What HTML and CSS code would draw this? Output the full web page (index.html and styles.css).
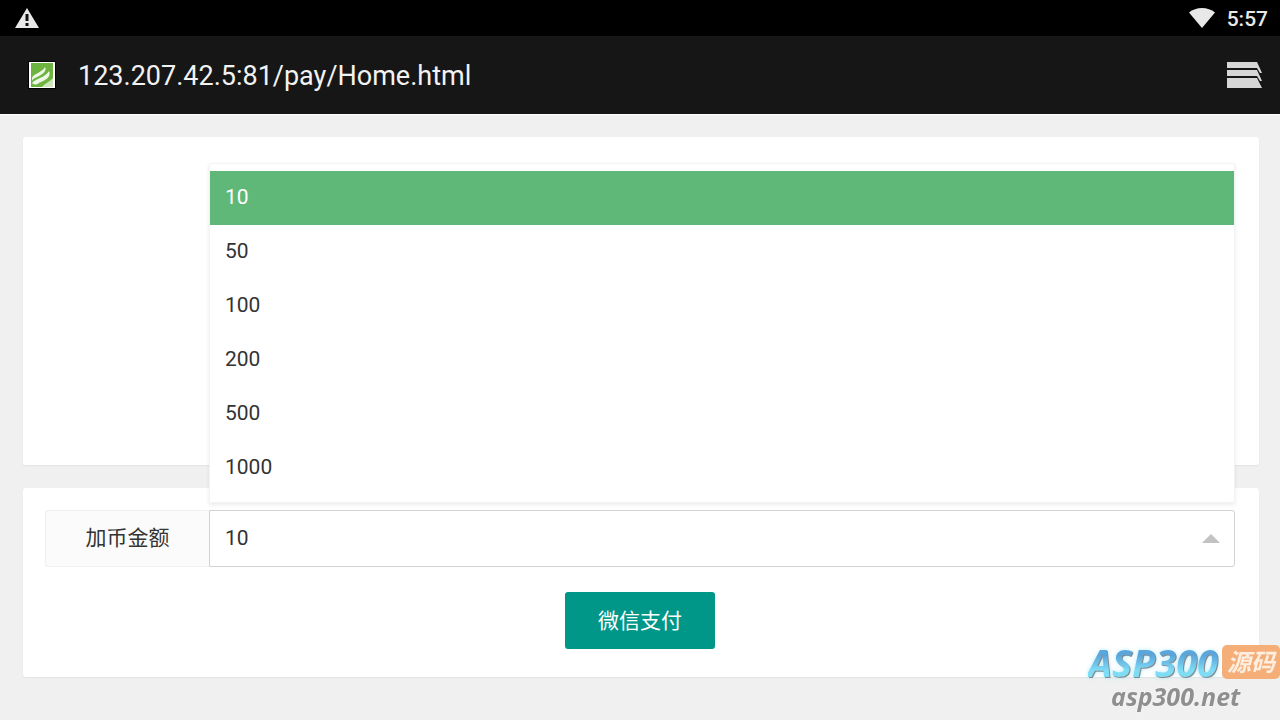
FILE: index.html
```
<!DOCTYPE html>
<html lang="zh-CN">
<head>
    <meta charset="UTF-8">
    <meta name="viewport" content="width=device-width, initial-scale=1.0">
    <title>微信支付</title>
    <link rel="stylesheet" href="styles.css">
</head>
<body>
    <div class="status-bar">
        <svg class="warn-icon" width="24" height="20" viewBox="0 0 24 20">
            <path d="M12 0L24 20H0Z" fill="#e8e8e8"/>
            <path d="M10.500 6h3v7h-3zM10.500 15h3v3h-3z" fill="#111"/>
        </svg>
        <div class="status-right">
            <svg width="26" height="20" viewBox="0 0 26 20">
                <path d="M0 4.500C7-1.500 19-1.500 26 4.500L13 20Z" fill="#e8e8e8"/>
            </svg>
            <span class="clock">5:57</span>
        </div>
    </div>

    <header class="title-bar">
        <svg class="site-icon" width="28" height="28" viewBox="0 0 28 28">
            <rect width="28" height="28" fill="#000"/>
            <rect x="1" y="1" width="26" height="26" fill="#fff"/>
            <rect x="3" y="2" width="22" height="24" fill="#6cb33f"/>
            <path d="M4 17C5 13 15 11 17 6C20 11 11 15 7 17C5 18 4 19 4 20Z" fill="#eef7e6"/>
            <path d="M4 22C7 18 18 16 21 10C24 17 15 20 11 22C8 24 6 24 4 22Z" fill="#eef7e6"/>
            <path d="M14 26C17 22 22 21 25 17V26Z" fill="#cfe6bd"/>
        </svg>
        <span class="address">123.207.42.5:81/pay/Home.html</span>
        <button type="button" class="tabs-btn" aria-label="Tabs">
            <svg width="36" height="28" viewBox="0 0 36 28">
                <path d="M0 1H30L35 12H33L30 7H0ZM0 9H30L35 20H33L30 15H0ZM0 17H30L35 27H0Z" fill="#d6d6d6"/>
            </svg>
        </button>
    </header>

    <main class="page">
        <section class="card card-code"></section>

        <section class="card">
            <form class="pay-form">
                <div class="form-item">
                    <label class="form-label" for="amount">加币金额</label>
                    <div class="select-wrap">
                        <select id="amount" class="amount">
                            <option selected>10</option>
                            <option>50</option>
                            <option>100</option>
                            <option>200</option>
                            <option>500</option>
                            <option>1000</option>
                        </select>
                        <i class="edge"></i>
                        <div class="options" role="listbox" aria-label="加币金额">
                            <button type="button" class="option selected" role="option" aria-selected="true">10</button>
                            <button type="button" class="option" role="option">50</button>
                            <button type="button" class="option" role="option">100</button>
                            <button type="button" class="option" role="option">200</button>
                            <button type="button" class="option" role="option">500</button>
                            <button type="button" class="option" role="option">1000</button>
                        </div>
                    </div>
                </div>
                <button type="submit" class="pay-btn">微信支付</button>
            </form>
        </section>
    </main>

    <div class="watermark">
        <div class="mark-top">
            <span class="mark-name">ASP300</span>
            <span class="mark-tag">源码</span>
        </div>
        <div class="mark-url">asp300.net</div>
    </div>

    <script>
        const amount = document.getElementById("amount");
        const options = document.querySelectorAll(".option");

        options.forEach(function (item) {
            item.addEventListener("click", function () {
                options.forEach(el => el.classList.remove("selected"));
                item.classList.add("selected");
                amount.value = item.textContent;
            });
        });
    </script>
</body>
</html>
```
FILE: styles.css
```
* {
    box-sizing: border-box;
}

body {
    margin: 0;
    min-height: 100vh;
    background-color: #f0f0f0;
    color: #333;
    font-family: Roboto, "Noto Sans CJK SC", sans-serif;
    font-size: 21px;
}

button,
select {
    font: inherit;
}

.status-bar {
    display: flex;
    justify-content: space-between;
    align-items: center;
    height: 36px;
    padding: 0 12px 0 15px;
    background-color: #000;
}

.status-right {
    display: flex;
    align-items: center;
    gap: 12px;
}

.clock {
    color: #e8e8e8;
    font-weight: 500;
    line-height: 36px;
    padding-top: 2px;
}

.title-bar {
    display: flex;
    align-items: center;
    height: 78px;
    padding: 0 17px 0 28px;
    background-color: #161616;
}

.address {
    flex: 1;
    margin-left: 22px;
    padding-top: 2px;
    color: #f2f2f2;
    font-size: 27px;
}

.tabs-btn {
    display: flex;
    padding: 0;
    background: none;
    border: none;
}

.page {
    display: flex;
    flex-direction: column;
    gap: 23px;
    padding: 22px 21px 23px 23px;
    border-top: 1px solid #fff;
}

.card {
    padding: 22px 24px 28px 22px;
    background-color: #fff;
    border-radius: 3px;
    box-shadow: 0 1px 2px rgba(0, 0, 0, 0.06);
}

.card-code {
    min-height: 328px;
}

.pay-form {
    display: flex;
    flex-direction: column;
    align-items: center;
    gap: 25px;
}

.form-item {
    display: flex;
    width: 100%;
    height: 57px;
}

.form-label {
    width: 164px;
    border: 1px solid #f0f0f0;
    border-right: none;
    border-radius: 3px 0 0 3px;
    background-color: #fbfbfb;
    line-height: 54px;
    text-align: center;
}

.select-wrap {
    position: relative;
    flex: 1;
}

.amount {
    width: 100%;
    height: 100%;
    padding: 0 16px 2px 15px;
    appearance: none;
    border: 1px solid #d2d2d2;
    border-radius: 0 3px 3px 0;
    background-color: #fff;
    color: #333;
}

.edge {
    position: absolute;
    top: 24px;
    right: 15px;
    border: 9px solid transparent;
    border-top-width: 0;
    border-bottom-color: #c2c2c2;
    pointer-events: none;
}

.options {
    position: absolute;
    bottom: 64px;
    left: 0;
    width: 100%;
    padding: 7px 0;
    border: 1px solid #f3f3f3;
    background-color: #fff;
    box-shadow: 0 2px 4px rgba(0, 0, 0, 0.08);
}

.option {
    display: block;
    width: 100%;
    height: 54px;
    padding: 0 15px 2px;
    border: none;
    background-color: #fff;
    color: #333;
    text-align: left;
}

.option.selected {
    background-color: #5fb878;
    color: #fff;
}

.pay-btn {
    height: 57px;
    padding: 0 33px 4px;
    border: none;
    border-radius: 3px;
    background-color: #009688;
    color: #fff;
}

.watermark {
    position: fixed;
    right: 0;
    bottom: 7px;
    font-family: "Open Sans", "Noto Sans CJK SC", sans-serif;
    font-style: italic;
    font-weight: bold;
}

.mark-top {
    display: flex;
    gap: 4px;
}

.mark-name {
    background: linear-gradient(#5aa5dc 30%, #7fdcf5 75%);
    background-clip: text;
    color: transparent;
    font-size: 38px;
    line-height: 34px;
    filter: drop-shadow(1px 1px 0 #888) drop-shadow(0 0 2px #b8ecfa);
}

.mark-tag {
    padding: 0 5px;
    border-radius: 5px;
    background-color: #f6ae78;
    color: #fdeee0;
    font-size: 24px;
    line-height: 34px;
}

.mark-url {
    padding-left: 23px;
    color: #8f8f8f;
    font-size: 25px;
    line-height: 34px;
    text-shadow: 0 0 2px #fff;
}
```
